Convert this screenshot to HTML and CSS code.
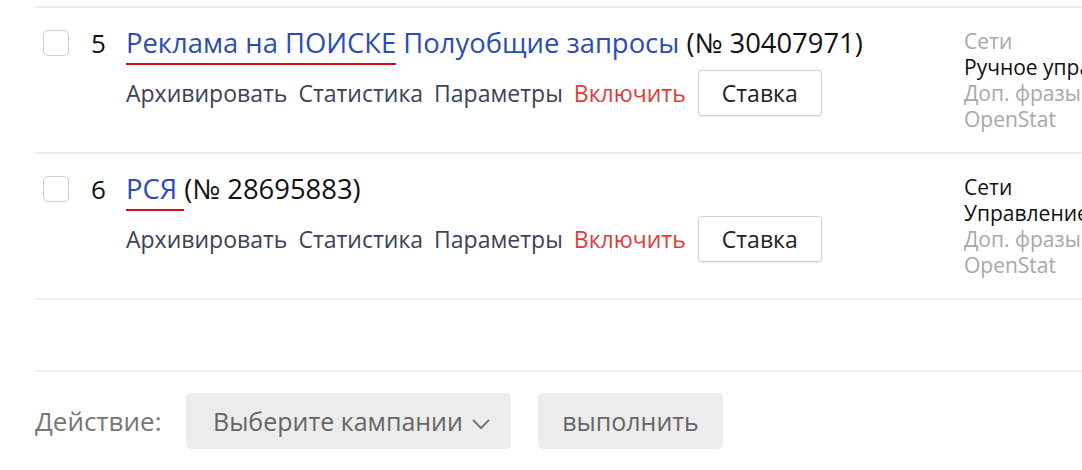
FILE: index.html
```html
<!DOCTYPE html>
<html lang="ru">
<head>
<meta charset="utf-8">
<link rel="stylesheet" href="styles.css">
</head>
<body>
<div class="page">
  <div class="row">
    <span class="check"></span>
    <span class="num">5</span>
    <div class="content">
      <div class="title"><a class="link"><span class="mark">Реклама на ПОИСКЕ</span> Полуобщие запросы</a> (№ 30407971)</div>
      <div class="actions">
        <a class="act">Архивировать</a>
        <a class="act">Статистика</a>
        <a class="act">Параметры</a>
        <a class="act on">Включить</a>
        <button class="bid">Ставка</button>
      </div>
    </div>
    <div class="meta">
      <div class="muted">Сети</div>
      <div>Ручное управление</div>
      <div class="muted">Доп. фразы</div>
      <div class="muted">OpenStat</div>
    </div>
  </div>
  <div class="row">
    <span class="check"></span>
    <span class="num">6</span>
    <div class="content">
      <div class="title"><a class="link"><span class="mark">РСЯ </span></a>(№ 28695883)</div>
      <div class="actions">
        <a class="act">Архивировать</a>
        <a class="act">Статистика</a>
        <a class="act">Параметры</a>
        <a class="act on">Включить</a>
        <button class="bid">Ставка</button>
      </div>
    </div>
    <div class="meta">
      <div>Сети</div>
      <div>Управление ставками</div>
      <div class="muted">Доп. фразы</div>
      <div class="muted">OpenStat</div>
    </div>
  </div>
  <div class="spacer"></div>
  <div class="footer">
    <span class="label">Действие:</span>
    <button class="gbtn select">Выберите кампании <svg class="chev" width="20" height="12" viewBox="0 0 20 12"><path d="M2 2 L10 10 L18 2" fill="none" stroke="#777" stroke-width="2"/></svg></button>
    <button class="gbtn run">выполнить</button>
  </div>
</div>
</body>
</html>
```

FILE: styles.css
```css
html, body {
  margin: 0;
  padding: 0;
  background: #fff;
  overflow: hidden;
}
body {
  font-family: "Open Sans", "Liberation Sans", Arial, sans-serif;
  color: #111;
  width: 1082px;
  height: 470px;
}
.page {
  padding: 6px 0 0 35px;
}
.row {
  display: flex;
  align-items: flex-start;
  border-top: 2px solid #eeeef0;
  height: 146px;
  box-sizing: border-box;
}
.check {
  flex: none;
  width: 24px;
  height: 24px;
  margin: 22px 0 0 8px;
  border: 1.5px solid #cfcfcf;
  border-radius: 5px;
}
.num {
  flex: none;
  width: 35px;
  margin-left: 22px;
  font-size: 26px;
  line-height: 34px;
  margin-top: 18px;
}
.content {
  flex: none;
  width: 838px;
  margin-top: 18px;
}
.title {
  font-size: 27.4px;
  line-height: 34px;
  white-space: nowrap;
}
.link {
  color: #2b4cb2;
  text-decoration: none;
}
.mark {
  border-bottom: 2px solid #d4111b;
  padding-bottom: 2px;
}
.actions {
  display: flex;
  align-items: center;
  margin-top: 10px;
  gap: 11px;
  font-size: 23px;
}
.act {
  color: #3d4256;
}
.act.on {
  color: #e13c38;
}
.bid {
  margin-left: 1px;
  width: 124px;
  height: 46px;
  border: 1px solid #cfcfcf;
  border-radius: 4px;
  background: #fff;
  font-family: inherit;
  font-size: 23px;
  color: #222;
  box-shadow: 0 1px 1px rgba(0,0,0,0.08);
}
.meta {
  flex: 1;
  margin-top: 20px;
  font-size: 21px;
  line-height: 26px;
  white-space: nowrap;
  overflow: hidden;
  color: #111;
}
.muted {
  color: #a8a8a8;
}
.spacer {
  height: 70px;
  border-top: 2px solid #eeeef0;
}
.footer {
  display: flex;
  align-items: center;
  border-top: 2px solid #eeeef0;
  padding-top: 21px;
}
.label {
  font-size: 26px;
  color: #777;
  width: 151px;
}
.gbtn {
  height: 56px;
  border: none;
  border-radius: 5px;
  background: #ececec;
  font-family: inherit;
  font-size: 25px;
  color: #666;
}
.select {
  width: 325px;
  text-align: left;
  padding-left: 27px;
  white-space: nowrap;
}
.chev {
  margin-left: 2px;
  vertical-align: middle;
}
.run {
  margin-left: 27px;
  width: 185px;
}
```
